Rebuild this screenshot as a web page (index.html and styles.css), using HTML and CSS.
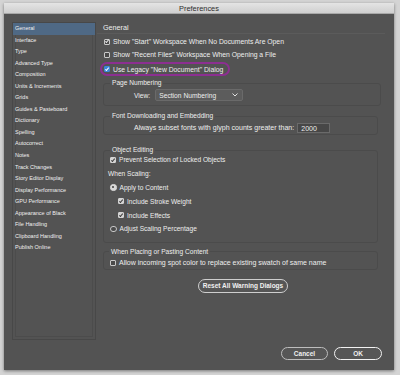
FILE: index.html
```html
<!DOCTYPE html>
<html>
<head>
<meta charset="utf-8">
<link rel="stylesheet" href="styles.css">
</head>
<body>
<div class="window">
  <div class="titlebar">Preferences</div>
  <div class="main">
    <div class="top">
      <ul class="sidebar">
        <li class="selected">General</li>
        <li>Interface</li>
        <li>Type</li>
        <li>Advanced Type</li>
        <li>Composition</li>
        <li>Units &amp; Increments</li>
        <li>Grids</li>
        <li>Guides &amp; Pasteboard</li>
        <li>Dictionary</li>
        <li>Spelling</li>
        <li>Autocorrect</li>
        <li>Notes</li>
        <li>Track Changes</li>
        <li>Story Editor Display</li>
        <li>Display Performance</li>
        <li>GPU Performance</li>
        <li>Appearance of Black</li>
        <li>File Handling</li>
        <li>Clipboard Handling</li>
        <li>Publish Online</li>
      </ul>
      <div class="pane">
        <div class="heading">General</div>
        <div class="general">
          <div class="row big"><span class="cb checked"></span>Show "Start" Workspace When No Documents Are Open</div>
          <div class="row big"><span class="cb"></span>Show "Recent Files" Workspace When Opening a File</div>
          <div class="ring big"><span class="cb blue"></span>Use Legacy "New Document" Dialog</div>
        </div>
        <fieldset class="group page">
          <legend>Page Numbering</legend>
          <div class="viewrow"><span class="lbl">View:</span><span class="select">Section Numbering<svg class="chev" width="6" height="4" viewBox="0 0 6 4"><path d="M0.5 0.5 L3 3 L5.5 0.5" fill="none" stroke="#e0e0e0" stroke-width="1"/></svg></span></div>
        </fieldset>
        <fieldset class="group font">
          <legend>Font Downloading and Embedding</legend>
          <div class="subsetrow">Always subset fonts with glyph counts greater than:<span class="input">2000</span></div>
        </fieldset>
        <fieldset class="group obj">
          <legend>Object Editing</legend>
          <div class="row first"><span class="cb light checked"></span>Prevent Selection of Locked Objects</div>
          <div class="row scal">When Scaling:</div>
          <div class="row"><span class="radio on"></span>Apply to Content</div>
          <div class="row sub"><span class="cb light checked"></span>Include Stroke Weight</div>
          <div class="row sub"><span class="cb light checked"></span>Include Effects</div>
          <div class="row"><span class="radio"></span>Adjust Scaling Percentage</div>
        </fieldset>
        <fieldset class="group place">
          <legend>When Placing or Pasting Content</legend>
          <div class="row placerow"><span class="cb"></span>Allow incoming spot color to replace existing swatch of same name</div>
        </fieldset>
        <div class="resetwrap"><span class="btn reset">Reset All Warning Dialogs</span></div>
      </div>
    </div>
    <div class="footer">
      <span class="btn cancel">Cancel</span>
      <span class="btn ok">OK</span>
    </div>
  </div>
</div>
</body>
</html>
```
FILE: styles.css
```css
html, body {
  margin: 0;
  padding: 0;
}
body {
  background: #d4d4d4;
  width: 400px;
  height: 375px;
  overflow: hidden;
  font-family: "Liberation Sans", Arial, sans-serif;
  color: #eeeeee;
}
.window {
  margin: 3px 0 0 4px;
  width: 390px;
  height: 367px;
  background: #535353;
  box-shadow: 0 1px 3px rgba(0,0,0,0.45);
  display: flex;
  flex-direction: column;
}
.titlebar {
  height: 11px;
  line-height: 11px;
  background: linear-gradient(#e4e4e4, #cfcfcf);
  border-bottom: 1px solid #a8a8a8;
  box-sizing: border-box;
  text-align: center;
  font-size: 7.4px;
  color: #2e2e2e;
}
.main {
  flex: 1;
  display: flex;
  flex-direction: column;
  padding: 8px 0 0 8px;
}
.top {
  display: flex;
}
.sidebar {
  list-style: none;
  margin: 0;
  padding: 0;
  width: 84px;
  height: 318px;
  box-sizing: border-box;
  border: 1px solid #484848;
  box-shadow: inset 0 0 0 2px #535353, inset 0 0 0 3px #4c4c4c;
  font-size: 5.5px;
}
.sidebar li {
  height: 11.55px;
  line-height: 11.55px;
  padding-left: 2px;
  color: #f0f0f0;
  white-space: nowrap;
}
.sidebar li.selected {
  background: #4f6985;
}
.pane {
  margin-left: 1px;
  width: 288px;
  font-size: 6.6px;
}
.heading {
  margin-top: 1px;
  height: 10px;
  line-height: 10px;
  padding-left: 6px;
  font-size: 7.2px;
}
.general {
  border-top: 1px solid #5b5b5b;
  padding-top: 1px;
}
.row {
  height: 13.8px;
  display: flex;
  align-items: center;
  white-space: nowrap;
}
.big {
  font-size: 6.8px;
}
.general .row {
  height: 13px;
  padding-left: 7px;
}
.ring {
  display: inline-flex;
  align-items: center;
  margin: 1px 0 0 3px;
  height: 14px;
  box-sizing: border-box;
  border: 2px solid #8c2f91;
  border-radius: 7px;
  padding: 0 5px 0 2px;
  white-space: nowrap;
}
.cb {
  display: inline-block;
  width: 6px;
  height: 6px;
  box-sizing: border-box;
  border: 1px solid #c8c8c8;
  background: #4a4a4a;
  border-radius: 1px;
  margin-right: 3px;
  position: relative;
  flex: none;
}
.cb.checked::after {
  content: "";
  position: absolute;
  left: 1.2px;
  top: -0.2px;
  width: 1.4px;
  height: 3px;
  border: solid #e8e8e8;
  border-width: 0 1px 1px 0;
  transform: rotate(40deg);
}
.cb.light {
  background: #d4d4d4;
  border-color: #d4d4d4;
}
.cb.light.checked::after {
  border-color: #3c3c3c;
}
.cb.blue {
  background: #3d86d9;
  border-color: #3d86d9;
}
.cb.blue::after {
  content: "";
  position: absolute;
  left: 1.2px;
  top: -0.2px;
  width: 1.4px;
  height: 3px;
  border: solid #ffffff;
  border-width: 0 1px 1px 0;
  transform: rotate(40deg);
}
.radio {
  display: inline-block;
  width: 6.5px;
  height: 6.5px;
  box-sizing: border-box;
  border-radius: 50%;
  border: 1px solid #c8c8c8;
  background: #4a4a4a;
  margin-right: 3px;
  position: relative;
  flex: none;
}
.radio.on {
  background: #d8d8d8;
  border-color: #d8d8d8;
}
.radio.on::after {
  content: "";
  position: absolute;
  left: 1.25px;
  top: 1.25px;
  width: 2px;
  height: 2px;
  border-radius: 50%;
  background: #404040;
}
.group {
  margin: 0 0 0 6px;
  width: 275px;
  box-sizing: border-box;
  border: 1px solid #4b4b4b;
  border-radius: 3px;
  padding: 0 0 0 6px;
  min-width: 0;
}
.group legend {
  padding: 0 2px;
  height: 10px;
  line-height: 10px;
  font-size: 6.6px;
}
.page {
  margin-top: 2px;
  width: 278px;
  padding-bottom: 4px;
}
.viewrow {
  display: flex;
  align-items: center;
  height: 12px;
  margin-top: 1px;
  padding-left: 24px;
  font-size: 6.7px;
}
.lbl {
  margin-right: 5px;
}
.select {
  display: flex;
  align-items: center;
  justify-content: space-between;
  width: 88px;
  height: 12px;
  box-sizing: border-box;
  border: 1px solid #6a6a6a;
  background: #5c5c5c;
  border-radius: 2px;
  padding: 0 4px 0 3px;
}
.font {
  margin-top: 5px;
  padding-bottom: 1px;
}
.subsetrow {
  display: flex;
  align-items: center;
  height: 11px;
  margin-top: 1px;
  padding-left: 24px;
  white-space: nowrap;
  font-size: 7.05px;
}
.input {
  display: inline-block;
  width: 33px;
  height: 10px;
  line-height: 9px;
  box-sizing: border-box;
  border: 1px solid #6a6a6a;
  background: #474747;
  padding-left: 3px;
  margin-left: 3px;
}
.obj {
  margin-top: 10px;
  padding-left: 0;
  padding-bottom: 6px;
}
.obj legend {
  margin-left: 6px;
}
.obj .row {
  padding-left: 6px;
}
.obj .row.first {
  margin-top: -2px;
}
.obj .row.scal {
  padding-left: 4px;
}
.obj .row.sub {
  padding-left: 14px;
}
.place {
  margin-top: 4px;
  padding-left: 0;
}
.place legend {
  margin-left: 5px;
}
.placerow {
  height: 12px;
  padding-left: 6px;
  font-size: 7px;
}
.resetwrap {
  display: flex;
  justify-content: center;
  margin-top: 9px;
  padding-left: 4px;
}
.btn {
  display: inline-flex;
  align-items: center;
  justify-content: center;
  box-sizing: border-box;
  height: 14px;
  border: 1px solid #cfcfcf;
  border-radius: 7px;
  background: #565656;
  font-size: 6.5px;
  font-weight: bold;
  color: #f0f0f0;
}
.reset {
  width: 90px;
}
.footer {
  display: flex;
  justify-content: flex-end;
  gap: 6px;
  margin-top: 7px;
  padding-right: 12px;
}
.cancel {
  width: 47px;
  height: 13px;
  border-color: #bdbdbd;
}
.ok {
  width: 48px;
  height: 13px;
  border: 1.5px solid #f2f2f2;
}
```
